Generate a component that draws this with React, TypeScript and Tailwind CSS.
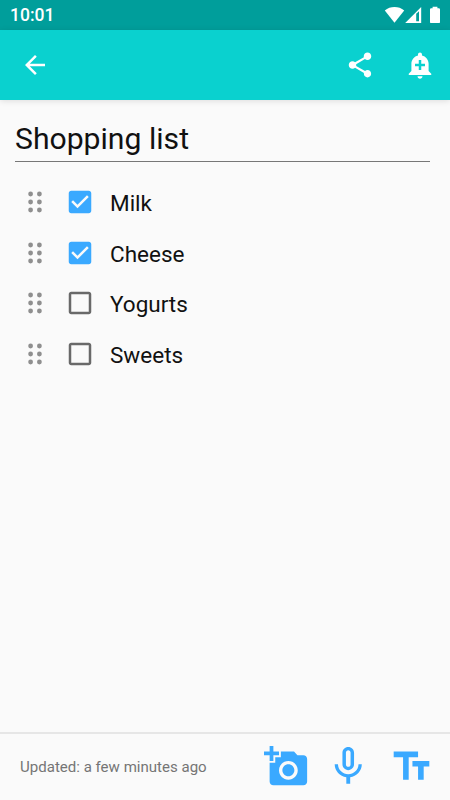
import React, { useState } from "react";

type Item = { label: string; done: boolean };

const initialItems: Item[] = [
  { label: "Milk", done: true },
  { label: "Cheese", done: true },
  { label: "Yogurts", done: false },
  { label: "Sweets", done: false },
];

function Icon({ d, className }: { d: string; className: string }) {
  return (
    <svg viewBox="0 0 24 24" fill="currentColor" className={className}>
      <path d={d} />
    </svg>
  );
}

const paths = {
  back: "M20 11H7.83l5.59-5.59L12 4l-8 8 8 8 1.41-1.41L7.83 13H20v-2z",
  share:
    "M18 16.08c-.76 0-1.44.3-1.96.77L8.91 12.7c.05-.23.09-.46.09-.7s-.04-.47-.09-.7l7.05-4.11c.54.5 1.25.81 2.04.81 1.66 0 3-1.34 3-3s-1.34-3-3-3-3 1.34-3 3c0 .24.04.47.09.7L8.04 9.81C7.5 9.31 6.79 9 6 9c-1.66 0-3 1.34-3 3s1.34 3 3 3c.79 0 1.5-.31 2.04-.81l7.12 4.16c-.05.21-.08.43-.08.65 0 1.61 1.31 2.92 2.92 2.92s2.92-1.31 2.92-2.92-1.31-2.92-2.92-2.92z",
  bell: "M10.01 21.01c0 1.1.89 1.99 1.99 1.99s1.99-.89 1.99-1.99h-3.98zm8.87-4.19V11c0-3.25-2.25-5.97-5.29-6.69v-.72C13.59 2.71 12.88 2 12 2s-1.59.71-1.59 1.59v.72C7.37 5.03 5.12 7.75 5.12 11v5.82L3 18.94V20h18v-1.06l-2.12-2.12zM16 13.01h-3v3h-2v-3H8V11h3V8h2v3h3v2.01z",
  checked:
    "M19 3H5c-1.11 0-2 .9-2 2v14c0 1.1.89 2 2 2h14c1.11 0 2-.9 2-2V5c0-1.1-.89-2-2-2zm-9 14l-5-5 1.41-1.41L10 14.17l7.59-7.59L19 8l-9 9z",
  unchecked:
    "M19 5v14H5V5h14m0-2H5c-1.1 0-2 .9-2 2v14c0 1.1.9 2 2 2h14c1.1 0 2-.9 2-2V5c0-1.1-.9-2-2-2z",
  camera:
    "M3 4V1h2v3h3v2H5v3H3V6H0V4h3zm3 6V7h3V4h7l1.83 2H21c1.1 0 2 .9 2 2v12c0 1.1-.9 2-2 2H5c-1.1 0-2-.9-2-2V10h3zm7 9c2.76 0 5-2.24 5-5s-2.24-5-5-5-5 2.24-5 5 2.24 5 5 5zm-3.2-5c0 1.77 1.43 3.2 3.2 3.2s3.2-1.43 3.2-3.2-1.43-3.2-3.2-3.2-3.2 1.43-3.2 3.2z",
  mic: "M12 14c1.66 0 2.99-1.34 2.99-3L15 5c0-1.66-1.34-3-3-3S9 3.34 9 5v6c0 1.66 1.34 3 3 3zm-1.2-9.1c0-.66.54-1.2 1.2-1.2.66 0 1.2.54 1.2 1.2l-.01 6.2c0 .66-.53 1.2-1.19 1.2-.66 0-1.2-.54-1.2-1.2V4.9zm6.5 6.1c0 3-2.54 5.1-5.3 5.1S6.7 14 6.7 11H5c0 3.41 2.72 6.23 6 6.72V21h2v-3.28c3.28-.48 6-3.3 6-6.72h-1.7z",
  text: "M2.5 4v3h5v12h3V7h5V4h-13zm19 5h-9v3h3v7h3v-7h3V9z",
};

function StatusBar() {
  return (
    <div className="flex h-[30px] shrink-0 items-center justify-between bg-[#009e9b] pl-[10px] text-white">
      <span className="pt-[2px] text-[17.5px] leading-none font-medium">10:01</span>
      <svg viewBox="0 0 70 30" className="h-[30px] w-[70px]" fill="currentColor">
        <path d="M4.8 10.4C10.2 5.9 18.8 5.9 24.2 10.4L14.5 22.8z" />
        <path d="M41.2 7v16H25.2z" />
        <path d="M36.2 13.8l2.8-2.6v10h-2.8z" fill="#009e9b" />
        <path d="M52.6 6.7h4.8v1.6h1.4q1.2 0 1.2 1.2v12.4q0 1.2-1.2 1.2h-7.6q-1.2 0-1.2-1.2V9.5q0-1.2 1.2-1.2h1.4z" />
      </svg>
    </div>
  );
}

function DragHandle() {
  return (
    <svg viewBox="0 0 20 30" className="h-[30px] w-5" fill="#8f8f8f">
      {[7, 15, 23].map((y) => (
        <React.Fragment key={y}>
          <circle cx="5.6" cy={y} r="2.4" />
          <circle cx="14.4" cy={y} r="2.4" />
        </React.Fragment>
      ))}
    </svg>
  );
}

export default function App() {
  const [items, setItems] = useState(initialItems);
  const toggle = (index: number) =>
    setItems(items.map((it, i) => (i === index ? { ...it, done: !it.done } : it)));

  return (
    <div className="flex h-[800px] w-[450px] flex-col overflow-hidden bg-[#fafafa] font-[Roboto,sans-serif] text-[#111]">
      <StatusBar />
      <header className="flex h-[70px] shrink-0 items-center bg-[#0ad1cf] px-[15px] text-white shadow-[0_1px_6px_rgba(0,0,0,0.12)]">
        <button className="ml-[5px]" aria-label="Back">
          <Icon d={paths.back} className="size-[30px]" />
        </button>
        <button className="ml-auto" aria-label="Share">
          <Icon d={paths.share} className="size-[30px]" />
        </button>
        <button className="ml-[30px]" aria-label="Add reminder">
          <Icon d={paths.bell} className="size-[30px]" />
        </button>
      </header>

      <main className="flex-1 pt-[17px]">
        <h1 className="mr-5 ml-[15px] h-[45px] border-b border-[#777] text-[30.15px] leading-[44px] whitespace-nowrap">
          Shopping list
        </h1>
        <ul className="pt-[15px]">
          {items.map((item, i) => (
            <li key={item.label} className="flex h-[50.5px] items-center pl-[25px]">
              <DragHandle />
              <button
                className="ml-5"
                aria-label={item.label}
                aria-pressed={item.done}
                onClick={() => toggle(i)}
              >
                {item.done ? (
                  <Icon d={paths.checked} className="size-[30px] text-[#3aa9ff]" />
                ) : (
                  <Icon d={paths.unchecked} className="size-[30px] text-[#696969]" />
                )}
              </button>
              <span className="ml-[15px] pt-[2px] text-[22.5px] leading-[30px]">{item.label}</span>
            </li>
          ))}
        </ul>
      </main>

      <footer className="flex h-[68px] shrink-0 items-center border-t-2 border-[#e6e6e6] pb-[2px] pl-5 text-[#3aa9ff]">
        <span className="w-[244px] pt-[3px] text-[15.05px] text-[#757575]">Updated: a few minutes ago</span>
        <Icon d={paths.camera} className="size-[45px]" />
        <Icon d={paths.mic} className="ml-4 size-[46.5px]" />
        <Icon d={paths.text} className="ml-[17.5px] size-[45px]" />
      </footer>
    </div>
  );
}
